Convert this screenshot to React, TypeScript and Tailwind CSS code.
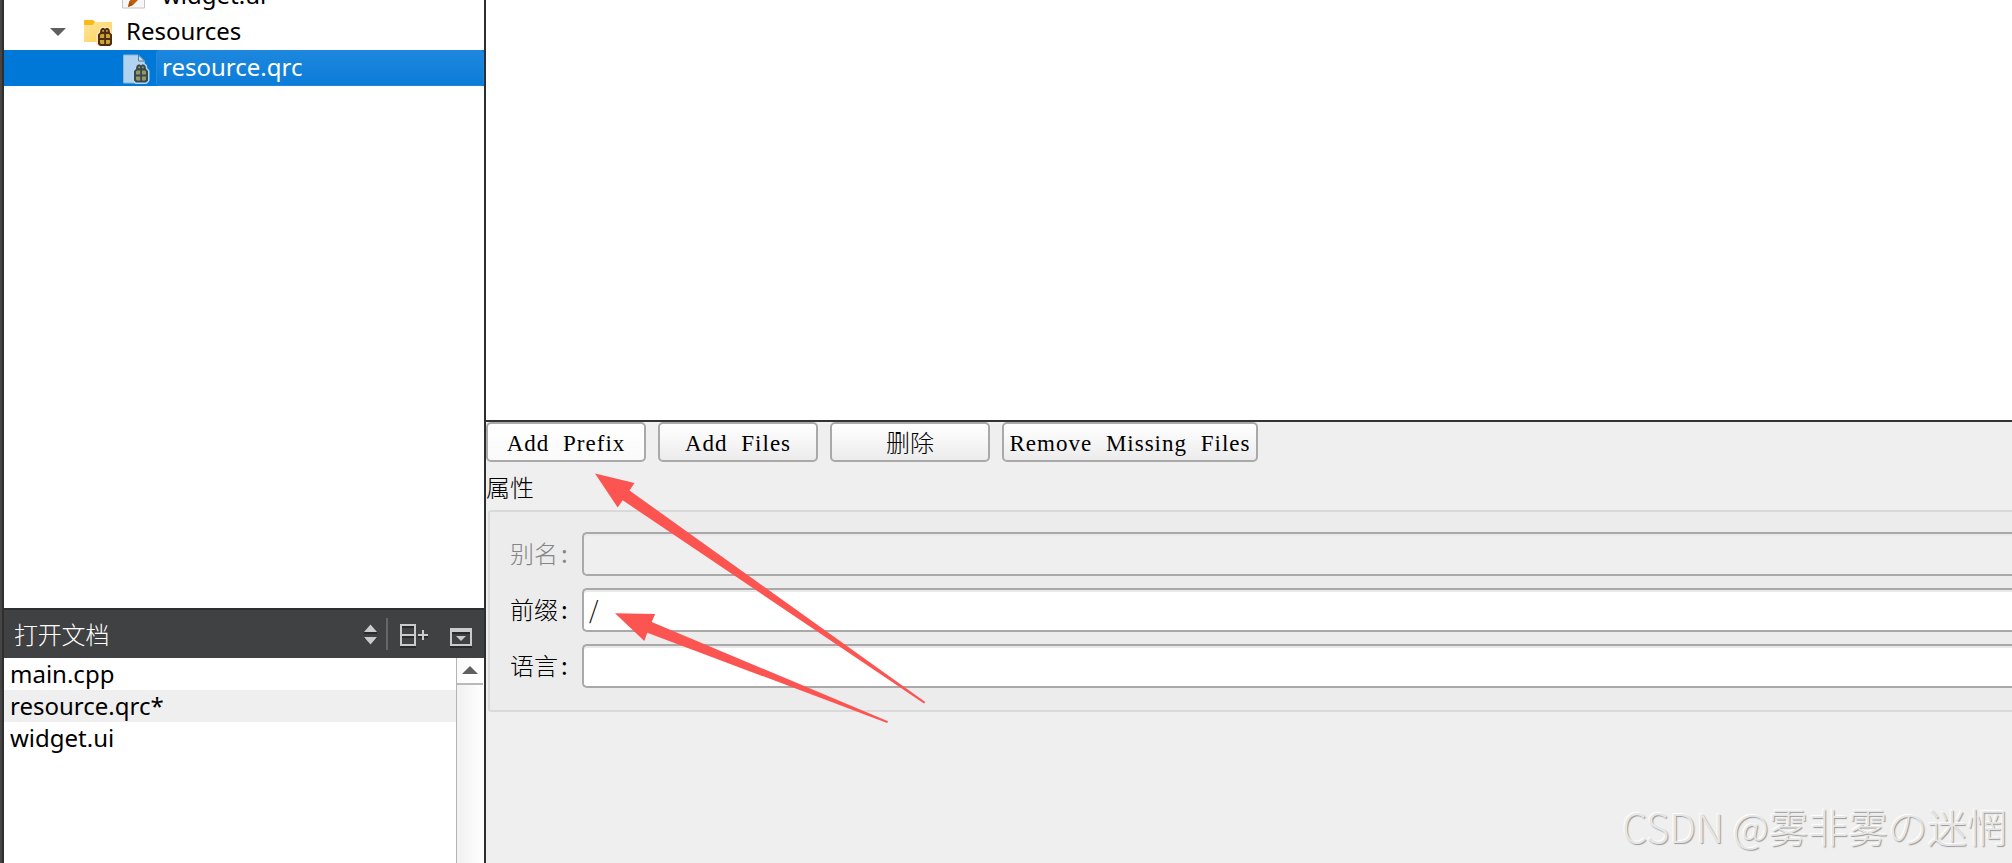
import { ReactNode } from "react";
import { clsx } from "clsx";

const openDocuments = ["main.cpp", "resource.qrc*", "widget.ui"];

function ResourceBadge({ fill, stroke, halo }: { fill: string; stroke: string; halo: string }) {
    return (
        <g>
            <path
                d="M4 0h6l1.500 1.500.5 3 2 2V16l-2 2H2l-2-2V6.500l2-2 .5-3z"
                fill={halo}
                stroke={halo}
                strokeWidth="3"
                strokeLinejoin="round"
            />
            <path
                d="M4 0h2l1 1 1-1h2l1.500 1.500.5 3 2 2V16l-2 2H2l-2-2V6.500l2-2 .5-3z"
                fill={stroke}
            />
            <path
                d="M4.300 2h1.700v1.800H4.300zM8 2h1.700v1.800H8zM3 6h3.200v4H2V7zM8 6h3l1 1v3H8zM2 12h4.200v4H3l-1-1zM8 12h4v3l-1 1H8z"
                fill={fill}
            />
        </g>
    );
}

function FolderIcon() {
    return (
        <svg className="h-7 w-7 shrink-0" viewBox="0 0 28 28">
            <defs>
                <linearGradient id="folder" x1="0" y1="0" x2="1" y2="1">
                    <stop offset="0" stopColor="#ffe69c" />
                    <stop offset="1" stopColor="#ffcf53" />
                </linearGradient>
            </defs>
            <path d="M0 2.500 1 2h8l2 2h3v4H0z" fill="#fbb917" />
            <path d="M0 7h9l2-3h17v20H0z" fill="url(#folder)" />
            <g transform="translate(14 10)">
                <ResourceBadge fill="#c9a52e" stroke="#512a18" halo="#ffe8b4" />
            </g>
        </svg>
    );
}

function QrcIcon() {
    return (
        <svg className="h-[31px] w-7 shrink-0" viewBox="0 0 28 31">
            <path d="M1.500 2h15l6 6v22h-21z" fill="#b0d3ef" stroke="#8db2d0" />
            <path d="M16.500 2v6h6z" fill="#c6e0f5" stroke="#57799a" />
            <g transform="translate(12 11.500)">
                <ResourceBadge fill="#8e9c63" stroke="#3c4650" halo="#b5d6ee" />
            </g>
        </svg>
    );
}

function UiFileIcon() {
    return (
        <svg className="h-7 w-6 shrink-0" viewBox="0 0 24 28">
            <path d="M.5.500h22v25.500H.5z" fill="#f7f7f7" stroke="#c4c4c4" />
            <path d="M6 25l1.500-6L19 7l4 4L11 23z" fill="#c05f0b" />
            <path d="M6 25l1.500-6 3.500 4z" fill="#a94f06" />
        </svg>
    );
}

function ProjectTree() {
    return (
        <div className="flex h-[608px] flex-col overflow-hidden bg-white text-black">
            <div className="-mt-[22px] flex h-9 shrink-0 items-center pl-[118px]">
                <UiFileIcon />
                <span className="ml-[16px] h-9 leading-[34px]">widget.ui</span>
            </div>
            <div className="flex h-9 shrink-0 items-center pl-[46px]">
                <svg className="h-2 w-4" viewBox="0 0 16 8">
                    <path d="M0 0h16L8 8z" fill="#5f5f5f" />
                </svg>
                <div className="ml-[18px] flex">
                    <FolderIcon />
                </div>
                <span className="ml-[14px] h-9 leading-[34px]">Resources</span>
            </div>
            <div className="flex h-9 shrink-0 items-center bg-[#0078d7] pl-[118px] text-white">
                <QrcIcon />
                <span className="ml-[6px] h-9 flex-1 rounded-[3px] border border-[#2288dc] bg-linear-to-b from-[#1c87dd] to-[#0b7cd9] pl-[5px] leading-8">
                    resource.qrc
                </span>
            </div>
        </div>
    );
}

function DocumentsHeader() {
    return (
        <div className="flex h-[50px] shrink-0 items-center border-t-2 border-[#2d2e2f] bg-[#404142] pl-2.5">
            <span className="flex-1 text-2xl tracking-[-0.2px] text-white font-[Noto_Sans_CJK_SC,sans-serif] font-light">
                打开文档
            </span>
            <svg className="h-12 w-[124px]" viewBox="360 610 124 48" shapeRendering="crispEdges">
                <g fill="#292a2b">
                    <path d="M364 632h13v2h-13zM364 637h13v2h-13z" />
                    <path d="M400 646h16v2h-16zM402 626h12v2h-12zM402 636h12v2h-12zM418 636h10v2h-10zM450 646h22v2h-22zM452 632h18v2h-18z" />
                </g>
                <g fill="#cacbcc" shapeRendering="auto">
                    <path d="M364 632l6.500-7.500 6.500 7.500zM364 637h13l-6.500 7.500z" />
                    <path d="M456 636h10l-5 5z" />
                </g>
                <path d="M386 618h2v32h-2z" fill="#666768" />
                <path
                    d="M400 624h16v22h-16zM402 626v8h12v-8zM402 636v8h12v-8z"
                    fill="#cacbcc"
                    fillRule="evenodd"
                />
                <path d="M418 634h4v-4h2v4h4v2h-4v4h-2v-4h-4z" fill="#cacbcc" />
                <path d="M450 628h22v18h-22zM452 632v12h18v-12z" fill="#cacbcc" fillRule="evenodd" />
            </svg>
        </div>
    );
}

function OpenDocuments() {
    return (
        <div className="flex flex-1 bg-white text-black">
            <ul className="flex-1">
                {openDocuments.map((name, i) => (
                    <li key={name} className={clsx("h-8 pl-1.5 leading-8", i === 1 && "bg-[#efefef]")}>
                        {name}
                    </li>
                ))}
            </ul>
            <div className="w-7 border-l border-[#b4b4b4] bg-linear-to-r from-[#f1f1f1] to-white">
                <div className="mr-px flex h-[27px] justify-center border-b-2 border-[#b9b9b9] bg-linear-to-r from-[#fafafa] to-white pt-2">
                    <svg className="h-2 w-4" viewBox="0 0 16 8">
                        <path d="M0 8h16L8 0z" fill="#5f5f5f" />
                    </svg>
                </div>
            </div>
        </div>
    );
}

function ToolButton({ className, children }: { className?: string; children: ReactNode }) {
    return (
        <button
            className={clsx(
                "h-10 rounded-[5px] border-2 border-[#a9a9a9] bg-linear-to-b from-white pt-0.5 text-center leading-9 whitespace-pre [word-spacing:7px]",
                className ?? "w-40 to-[#ececec]"
            )}
        >
            {children}
        </button>
    );
}

type FieldProps = {
    label: string;
    value?: string;
    disabled?: boolean;
};

function Field({ label, value, disabled }: FieldProps) {
    return (
        <div className="flex h-11 items-center text-2xl font-light tracking-normal font-[Noto_Sans_CJK_SC,sans-serif]">
            <label
                className={clsx(
                    "flex h-11 w-[72px] shrink-0 leading-[42px]",
                    disabled ? "text-[#858585]" : "text-black"
                )}
            >
                {label}
                <span className="pl-[3px] font-normal">:</span>
            </label>
            <div
                className={clsx(
                    "h-11 flex-1 rounded-l-[5px] border-2 border-r-0 border-[#a9a9a9] pl-[5px] leading-[38px] shadow-[inset_0_2px_0_#e9e9e9]",
                    disabled ? "bg-[#efefef]" : "bg-white"
                )}
            >
                {value}
            </div>
        </div>
    );
}

function ResourceEditor() {
    return (
        <div className="flex flex-1 flex-col bg-[#efefef] font-[Liberation_Serif,serif] text-[23px] tracking-[1px] text-black">
            <div className="h-[422px] border-b-2 border-[#333432] bg-white" />
            <div className="flex gap-3">
                <ToolButton className="w-40 to-[#fafafa]">Add Prefix</ToolButton>
                <ToolButton>Add Files</ToolButton>
                <ToolButton>
                    <span className="text-2xl font-light tracking-normal font-[Noto_Sans_CJK_SC,sans-serif]">删除</span>
                </ToolButton>
                <ToolButton className="w-64 px-0 to-[#ececec]">Remove Missing Files</ToolButton>
            </div>
            <div className="h-12 text-2xl leading-[50px] font-light tracking-normal font-[Noto_Sans_CJK_SC,sans-serif]">
                属性
            </div>
            <div className="ml-0.5 flex h-[202px] flex-col gap-3 rounded-l-[3px] border-2 border-r-0 border-[#d9d9d9] bg-[#ececec] pt-5 pl-5">
                <Field label="别名" disabled />
                <Field label="前缀" value="/" />
                <Field label="语言" />
            </div>
        </div>
    );
}

function Arrows() {
    return (
        <svg className="pointer-events-none absolute inset-0 h-full w-full" viewBox="0 0 2012 863">
            <g fill="#fc5451">
                <path d="M595 473.500 634.500 483 629.500 490.500 925.300 702 924 703.500 622.700 500.300 617.700 507.500z" />
                <path d="M615 613.300 655.200 614 651.700 622 888 721.300 887.200 723 647.300 632.700 644.300 641z" />
            </g>
        </svg>
    );
}

export default function App() {
    return (
        <div className="relative flex h-[863px] w-[2012px] overflow-hidden bg-[#efefef]">
            <div className="w-1 border-r-2 border-[#2d2e2f] bg-[#464544]" />
            <div className="flex w-[482px] shrink-0 flex-col border-r-2 border-[#2d2e2f] font-[Noto_Sans,sans-serif] text-2xl leading-none tracking-normal">
                <ProjectTree />
                <DocumentsHeader />
                <OpenDocuments />
            </div>
            <ResourceEditor />
            <Arrows />
            <div className="absolute right-[5px] bottom-[9px] flex items-center text-[39.7px] leading-[56px] font-light whitespace-pre text-[#e6e6e6] font-[Noto_Sans_CJK_SC,sans-serif] [text-shadow:1px_1px_1px_#989898,-1px_-1px_1px_#ffffff]">
                CSDN @雾非雾の迷惘
            </div>
        </div>
    );
}
